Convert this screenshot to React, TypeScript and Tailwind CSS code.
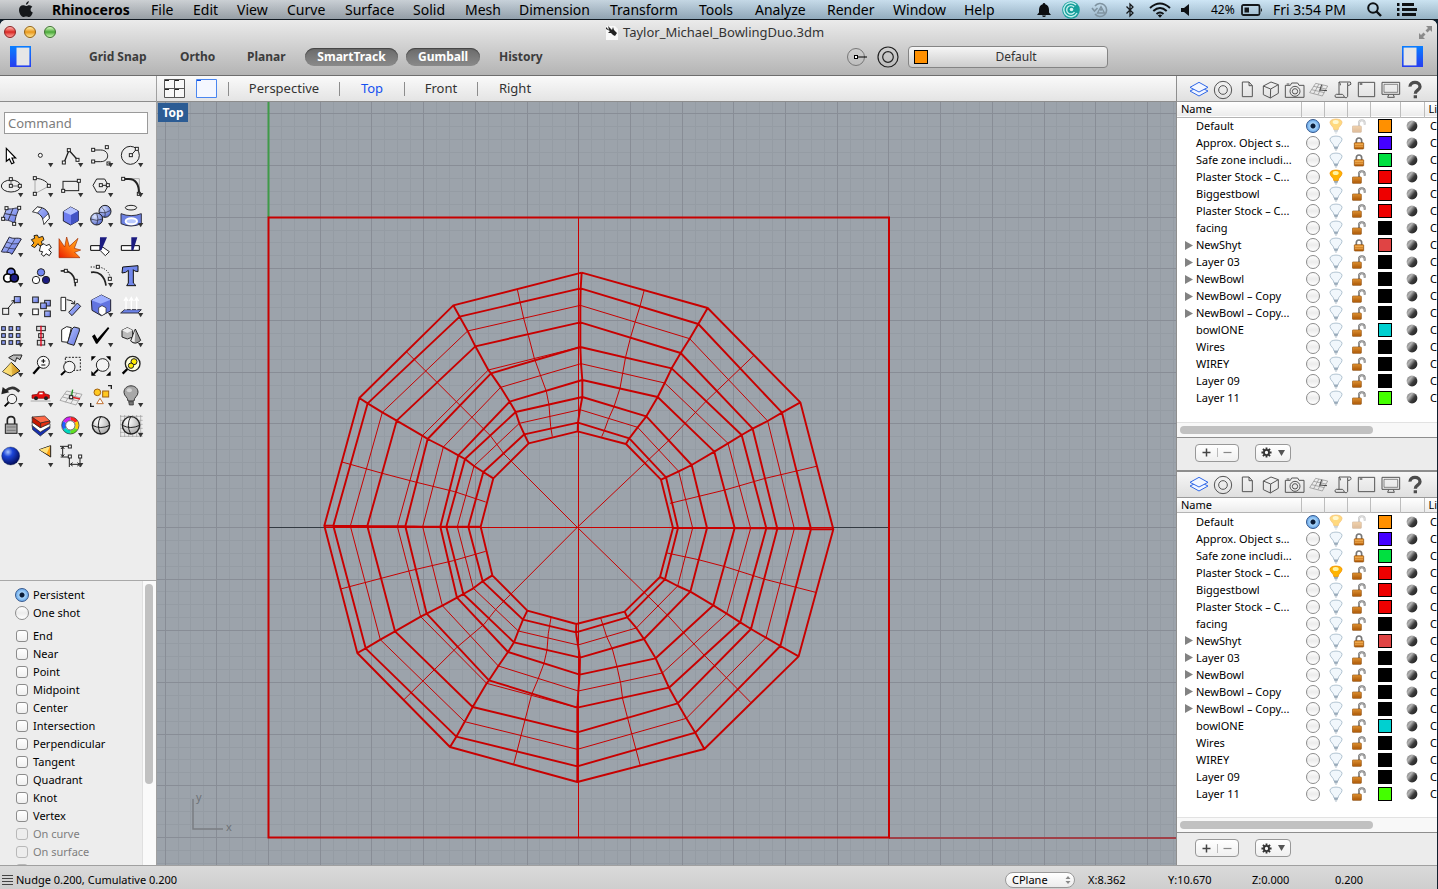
import React from "react";

type Pt = [number, number];

/* ---------- shared drawing helpers ---------- */

const Sq = ({ x, y }: { x: number; y: number }) => (
  <rect x={x - 5} y={y - 5} width="9" height="9" fill="#fff" stroke="#222" strokeWidth="3" />
);

const Gradients = () => (
  <svg className="absolute h-0 w-0" aria-hidden="true">
    <defs>
      <linearGradient id="blueBox" x1="0" y1="0" x2="1" y2="1">
        <stop offset="0" stopColor="#b9c8ff" />
        <stop offset="1" stopColor="#5f6fe0" />
      </linearGradient>
      <radialGradient id="blueBall" cx=".35" cy=".3" r=".8">
        <stop offset="0" stopColor="#dfe8ff" />
        <stop offset="1" stopColor="#4a5fc8" />
      </radialGradient>
      <radialGradient id="deepBall" cx=".35" cy=".28" r=".75">
        <stop offset="0" stopColor="#a8c4ff" />
        <stop offset=".35" stopColor="#1c45d8" />
        <stop offset="1" stopColor="#020a58" />
      </radialGradient>
      <radialGradient id="greyBall" cx=".35" cy=".3" r=".8">
        <stop offset="0" stopColor="#fff" />
        <stop offset="1" stopColor="#a2a2a2" />
      </radialGradient>
      <linearGradient id="fire" x1="0" y1="1" x2="1" y2="0">
        <stop offset="0" stopColor="#e81c00" />
        <stop offset=".5" stopColor="#ff7a10" />
        <stop offset="1" stopColor="#ffc020" />
      </linearGradient>
      <linearGradient id="gold" x1="0" y1="0" x2="1" y2="0">
        <stop offset="0" stopColor="#ffe680" />
        <stop offset="1" stopColor="#c98a10" />
      </linearGradient>
      <linearGradient id="brass" x1="0" y1="0" x2="0" y2="1">
        <stop offset="0" stopColor="#f2a23c" />
        <stop offset="1" stopColor="#b45c08" />
      </linearGradient>
      <linearGradient id="material" x1="0" y1=".1" x2="1" y2=".9">
        <stop offset="0" stopColor="#777" />
        <stop offset=".3" stopColor="#b4b4b4" />
        <stop offset=".6" stopColor="#3c3c3c" />
        <stop offset="1" stopColor="#1c1c1c" />
      </linearGradient>
      <linearGradient id="sideBlue" x1="0" y1="0" x2="0" y2="1">
        <stop offset="0" stopColor="#0a7cff" />
        <stop offset="1" stopColor="#2640f0" />
      </linearGradient>
    </defs>
  </svg>
);

/* ---------- tool palette ---------- */

type Tool = { name: string; more?: boolean; art: React.ReactNode };

const k = { stroke: "#222", strokeWidth: 3, fill: "none" } as const;

const tools: Tool[] = [
  { name: "Select", art: <path d="M19 22V61L28 54L35 68L42 65L36 51H47Z" fill="#fff" stroke="#000" strokeWidth="3.5" /> },
  { name: "Point", more: true, art: <circle cx="31" cy="43" r="6" {...k} fill="#fff" /> },
  { name: "Polyline", more: true, art: <g><path d="M12 65L27 28L53 57" {...k} strokeWidth="4" /><Sq x={12} y={65} /><Sq x={27} y={28} /><Sq x={53} y={57} /></g> },
  { name: "Curve", more: true, art: <g><path d="M10 27H32C60 27 60 62 32 62H10" {...k} /><Sq x={10} y={27} /><Sq x={10} y={62} /><Sq x={51} y={19} /><Sq x={56} y={68} /></g> },
  { name: "Circle", more: true, art: <g><circle cx="31" cy="43" r="27" {...k} /><path d="M33 43L50 24" {...k} /><Sq x={33} y={43} /><Sq x={51} y={24} /></g> },

  { name: "Ellipse", more: true, art: <g><ellipse cx="33" cy="45" rx="29" ry="18" {...k} /><path d="M33 25V45H59" {...k} strokeWidth="2" /><Sq x={33} y={45} /><Sq x={33} y={25} /><Sq x={60} y={45} /></g> },
  { name: "Arc", more: true, art: <g><path d="M15 68V22M15 68L57 45" stroke="#aaa" strokeWidth="3" /><path d="M15 22C38 22 54 34 57 45" {...k} /><Sq x={15} y={22} /><Sq x={15} y={69} /><Sq x={57} y={45} /></g> },
  { name: "Rectangle", more: true, art: <g><rect x="9" y="31" width="47" height="28" {...k} /><Sq x={10} y={60} /><Sq x={57} y={30} /></g> },
  { name: "Polygon", more: true, art: <g><path d="M20 24H44L55 43L44 63H20L9 43ZM33 43H54" {...k} /><Sq x={33} y={43} /><Sq x={54} y={43} /></g> },
  { name: "Fillet curves", more: true, art: <g><path d="M10 23H58V68" stroke="#aaa" strokeWidth="3" fill="none" /><path d="M10 24H26C46 24 57 36 57 68" {...k} strokeWidth="6" /><Sq x={10} y={24} /><Sq x={57} y={69} /></g> },

  { name: "Surface from points", more: true, art: <g><path d="M20 22C34 28 46 18 57 22L48 46L43 70C34 56 20 60 8 54Z" fill="url(#blueBox)" stroke="#334" strokeWidth="3" /><path d="M39 23L25 57M15 38L50 44" stroke="#334" strokeWidth="3" /><Sq x={20} y={22} /><Sq x={58} y={21} /><Sq x={43} y={69} /><Sq x={10} y={54} /></g> },
  { name: "Loft", more: true, art: <g><path d="M8 32L22 18C46 18 58 34 58 52L42 70C42 52 30 34 8 32Z" fill="url(#blueBox)" stroke="#222" strokeWidth="3" /><path d="M8 32L22 18L36 21L22 36Z" fill="#fff" stroke="#222" strokeWidth="2" /><path d="M38 54L55 38L58 52L42 70Z" fill="#fff" stroke="#222" strokeWidth="2" /></g> },
  { name: "Box", more: true, art: <g><path d="M32 18L55 30V59L32 72L10 60V32Z" fill="#6d7cf0" stroke="#223" strokeWidth="3" /><path d="M32 18L55 30L33 42L10 32Z" fill="#b4c2ff" /><path d="M33 42L55 30V59L33 72Z" fill="#4253c4" /></g> },
  { name: "Boolean union", more: true, art: <g><circle cx="45" cy="31" r="18" fill="url(#blueBall)" stroke="#222" strokeWidth="3" /><path d="M34 18Q50 30 44 49M28 34Q46 40 62 28" stroke="#223" strokeWidth="2" fill="none" /><circle cx="20" cy="54" r="18" fill="url(#blueBall)" stroke="#222" strokeWidth="3" /><path d="M20 36Q28 54 20 72M2 54Q20 62 38 54" stroke="#223" strokeWidth="2" fill="none" /></g> },
  { name: "Project curves", more: true, art: <g><ellipse cx="33" cy="20" rx="17" ry="7" {...k} /><path d="M3 38Q33 50 64 38V68Q33 82 3 68Z" fill="#6e83e4" stroke="#334" strokeWidth="3" /><ellipse cx="34" cy="61" rx="17" ry="9" fill="#b9c9ff" stroke="#fff" strokeWidth="6" /></g> },

  { name: "Mesh", more: true, art: <g><path d="M28 18C40 26 52 18 64 24L36 70C26 60 14 66 4 62Z" fill="url(#blueBox)" stroke="#223" strokeWidth="3" /><path d="M20 33Q38 42 54 38M12 47Q30 54 46 54M46 22L20 64" stroke="#223" strokeWidth="2" fill="none" /></g> },
  { name: "Plugins", art: <g><path d="M4 26L14 22L12 14L22 12L26 20L38 16L42 26L34 32L38 42L28 44L24 38L14 50L4 44L12 36Z" fill="#f8a010" stroke="#222" strokeWidth="3" /><path d="M32 44L42 38L48 44L58 40L64 50L56 56L64 64L58 74L48 68L42 76L34 70L38 62L28 60Z" fill="#fff" stroke="#222" strokeWidth="3" /></g> },
  { name: "Explode", art: <path d="M-3 23L14 48L20 18L28 46L54 22L43 52L62 57L44 64L60 80L-3 80Z" fill="url(#fire)" stroke="#a02800" strokeWidth="2" /> },
  { name: "Trim", art: <g><path d="M2 44H30V58H2Z" fill="#fff" stroke="#000" strokeWidth="3" /><path d="M38 48L58 62L46 74L30 58Z" fill="#fff" stroke="#222" strokeWidth="3" /><path d="M30 19H51L34 58H29Z" fill="#1b1b80" /></g> },
  { name: "Split", art: <g><path d="M4 44H58V58H4Z" fill="#fff" stroke="#000" strokeWidth="3" /><path d="M34 19H52L40 58H34Z" fill="#1b1b80" /></g> },

  { name: "Join", more: true, art: <g><circle cx="33" cy="34" r="12" fill="#6d7df0" stroke="#000" strokeWidth="5" /><circle cx="23" cy="51" r="12" fill="#fff" stroke="#000" strokeWidth="5" /><circle cx="43" cy="51" r="12" fill="#1b1b80" stroke="#000" strokeWidth="5" /></g> },
  { name: "Group", art: <g><circle cx="33" cy="34" r="11" fill="#7186f4" stroke="#222" strokeWidth="3" /><circle cx="18" cy="57" r="11" fill="#fff" stroke="#222" strokeWidth="3" /><circle cx="48" cy="57" r="11" fill="#1b1b80" stroke="#222" strokeWidth="3" /></g> },
  { name: "Edit points", art: <g><path d="M2 30C30 26 46 42 46 76" {...k} strokeWidth="5" /><Sq x={18} y={30} /><Sq x={48} y={60} /></g> },
  { name: "Offset", more: true, art: <g><path d="M3 34C26 30 44 44 48 74" {...k} strokeWidth="5" /><path d="M2 18H24Q58 22 62 56" {...k} strokeDasharray="4 4" /><Sq x={24} y={18} /><Sq x={60} y={54} /></g> },
  { name: "Text", art: <path d="M8 18L54 14V32L44 30L40 26V66L48 74H20L25 66V28L17 34L6 36Z" fill="#7187ec" stroke="#111" strokeWidth="3" /> },

  { name: "Move", more: true, art: <g><path d="M22 54L44 28M34 30L44 28L43 38" {...k} /><rect x="8" y="52" width="18" height="18" fill="#eee" stroke="#222" strokeWidth="3" /><rect x="43" y="17" width="18" height="18" fill="url(#blueBox)" stroke="#222" strokeWidth="3" /></g> },
  { name: "Copy", art: <g fill="url(#blueBox)" stroke="#222" strokeWidth="3"><rect x="8" y="18" width="17" height="17" /><rect x="8" y="54" width="17" height="17" fill="#fff" /><rect x="44" y="28" width="17" height="17" /><rect x="32" y="36" width="17" height="17" /><rect x="44" y="60" width="17" height="17" /></g> },
  { name: "Rotate", art: <g><path d="M3 19H17V59H3Z" fill="#fff" stroke="#222" strokeWidth="3" /><path d="M52 36L62 46L36 74L26 64Z" fill="url(#blueBox)" stroke="#222" strokeWidth="3" /><path d="M20 26Q36 26 43 38M33 37L44 39L44 29" {...k} /></g> },
  { name: "Boolean difference", more: true, art: <g><path d="M4 28L34 12L62 26V60L34 74L6 58Z" fill="#6274e0" stroke="#223" strokeWidth="3" /><path d="M4 28L34 12L62 26L32 38Z" fill="#9dafff" /><path d="M26 50L36 44L48 50V66L36 74L26 66Z" fill="#fff" stroke="#222" strokeWidth="2" /></g> },
  { name: "Extrude", more: true, art: <g><path d="M14 56L64 56L54 66H2Z" fill="#6b82e8" stroke="#334" strokeWidth="3" /><path d="M18 56V22M34 56V22M50 56V22M12 30L18 20L24 30M28 30L34 20L40 30M44 30L50 20L56 30" stroke="#fff" strokeWidth="4" fill="none" /></g> },

  { name: "Array", more: true, art: <g fill="#8a9bf4" stroke="#222" strokeWidth="3">{[17, 38, 59].map((y) => [5, 27, 49].map((x) => <rect key={`${x}${y}`} x={x} y={y} width="11" height="11" />))}</g> },
  { name: "Align", more: true, art: <g><rect x="20" y="16" width="26" height="13" fill="#ddd" stroke="#222" strokeWidth="3" /><rect x="26" y="38" width="14" height="12" fill="#ddd" stroke="#222" strokeWidth="3" /><rect x="22" y="58" width="22" height="14" fill="#ddd" stroke="#222" strokeWidth="3" /><path d="M33 14V76" stroke="#e0001a" strokeWidth="4" /></g> },
  { name: "Cage edit", more: true, art: <g><path d="M5 26L20 17L34 20L24 64L5 62Z" fill="#fff" stroke="#222" strokeWidth="3" /><path d="M36 24L42 18L58 22V30L42 73L22 67Z" fill="url(#blueBox)" stroke="#222" strokeWidth="3" /></g> },
  { name: "Check", more: true, art: <path d="M6 46L14 40L22 54L54 18L58 22L22 68H18Z" fill="#000" /> },
  { name: "Solids", more: true, art: <g><path d="M6 28L22 20L38 28V48L22 54L6 48Z" fill="#bbb" stroke="#222" strokeWidth="3" /><path d="M6 28L22 20L38 28L22 36Z" fill="#eee" /><path d="M46 24L62 58Q46 74 32 60Z" fill="#999" stroke="#222" strokeWidth="3" /><path d="M46 26L44 64L34 60Z" fill="#eee" /></g> },

  { name: "Drape", more: true, art: <g><path d="M34 34L60 60L34 76L8 62Z" fill="url(#gold)" stroke="#222" strokeWidth="3" /><path d="M34 34L36 74L8 62Z" fill="#ffe27a" opacity=".7" /><path d="M26 20L40 12H66L60 26L50 20L46 32L36 26Z" fill="#bbb" stroke="#222" strokeWidth="3" /></g> },
  { name: "Zoom", art: <g><circle cx="40" cy="34" r="18" fill="#f8f8f8" stroke="#222" strokeWidth="3" /><path d="M40 24V36M34 30H46M34 42H46" stroke="#000" strokeWidth="3" /><path d="M28 48L10 68" stroke="#000" strokeWidth="7" /></g> },
  { name: "Zoom window", art: <g><path d="M16 19H61V58H16Z" {...k} strokeDasharray="6 4" /><circle cx="28" cy="48" r="17" fill="#f3f3f3" stroke="#222" strokeWidth="3" /><path d="M16 60L3 72" stroke="#000" strokeWidth="6" /></g> },
  { name: "Zoom extents", art: <g><circle cx="38" cy="42" r="19" fill="#f3f3f3" stroke="#222" strokeWidth="3" /><path d="M24 56L12 68" stroke="#000" strokeWidth="6" /><path d="M4 16H18L4 30ZM62 16V30L48 16ZM4 74V60L18 74ZM62 74H48L62 60Z" fill="#000" /></g> },
  { name: "Zoom selected", art: <g><circle cx="38" cy="38" r="22" fill="#ffffe0" stroke="#222" strokeWidth="4" /><circle cx="42" cy="32" r="9" fill="#ffec00" stroke="#222" strokeWidth="3" /><circle cx="33" cy="44" r="8" fill="#ffec00" stroke="#222" strokeWidth="3" /><path d="M22 54L8 68" stroke="#000" strokeWidth="7" /></g> },

  { name: "Undo view", more: true, art: <g><path d="M16 30Q38 10 58 32" stroke="#333" strokeWidth="8" fill="none" /><path d="M4 40L8 18L28 34Z" fill="#222" /><circle cx="36" cy="54" r="14" fill="#f3f3f3" stroke="#222" strokeWidth="3" /><path d="M26 64L14 76" stroke="#000" strokeWidth="6" /></g> },
  { name: "Set view", more: true, art: <g><path d="M6 42L22 40L26 32H42L44 38L58 42V52H6Z" fill="#e81010" stroke="#700" strokeWidth="2" /><path d="M29 35H38V40H27Z" fill="#fff" /><circle cx="18" cy="52" r="6" fill="#222" /><circle cx="48" cy="52" r="6" fill="#222" /><path d="M2 60H62" stroke="#aaa" strokeWidth="3" /></g> },
  { name: "Construction plane", more: true, art: <g><path d="M20 30L66 40L48 72L0 58ZM14 39L60 50M8 48L54 60M36 33L16 64M51 36L32 68" stroke="#888" strokeWidth="2" fill="none" /><path d="M34 48L38 26" stroke="#209020" strokeWidth="4" /><path d="M34 48L60 54" stroke="#e02020" strokeWidth="4" /><Sq x={34} y={49} /></g> },
  { name: "Hide", more: true, art: <g><circle cx="22" cy="34" r="10" fill="#ffc820" stroke="#a06010" strokeWidth="3" /><rect x="38" y="30" width="18" height="18" fill="#ffc820" stroke="#a06010" strokeWidth="3" /><path d="M30 52L40 68H20Z" fill="#fff" stroke="#c07030" strokeWidth="3" /><path d="M54 14H64V24M2 66V76H12" {...k} strokeWidth="4" /></g> },
  { name: "Lights", more: true, art: <g><path d="M24 60C24 48 12 46 12 34C12 8 54 8 54 34C54 46 42 48 42 60Z" fill="#a8a8a8" stroke="#333" strokeWidth="3" /><ellipse cx="28" cy="28" rx="8" ry="6" fill="#d4d4d4" /><path d="M26 62H40V72H28Z" fill="#777" stroke="#222" strokeWidth="2" /></g> },

  { name: "Lock", more: true, art: <g><path d="M22 42V28Q22 17 33 17Q44 17 44 28V42" stroke="#222" strokeWidth="5" fill="none" /><rect x="16" y="39" width="35" height="28" fill="#aaa" stroke="#222" strokeWidth="3" /><path d="M20 48H47M20 58H47" stroke="#777" strokeWidth="3" /></g> },
  { name: "Layers", more: true, art: <g><path d="M6 42L30 62L60 46V52L31 75L8 56Z" fill="#1830b0" stroke="#222" strokeWidth="2" /><path d="M6 32L30 50L60 38V46L31 63L7 44Z" fill="#fff" stroke="#222" strokeWidth="2" /><path d="M6 18L32 34V50L7 34Z" fill="#c81800" stroke="#222" strokeWidth="2" /><path d="M6 18L44 15L60 30L32 36Z" fill="#ff6a48" stroke="#222" strokeWidth="2" /><path d="M32 36L60 30V36L32 50Z" fill="#e83010" stroke="#222" strokeWidth="2" /></g> },
  { name: "Properties", more: true, art: <g fill="none" strokeWidth="10">{["#ff2020", "#ffd000", "#60e020", "#00d8c0", "#2060ff", "#d020f0"].map((c, i) => <path key={c} d="M31 23A20 20 0 0 1 49 33" stroke={c} transform={`rotate(${i * 60} 31 43)`} />)}<circle cx="31" cy="43" r="26" stroke="#222" strokeWidth="2" /><circle cx="31" cy="43" r="14" stroke="#222" strokeWidth="2" fill="#fff" /></g> },
  { name: "Shade", art: <g><circle cx="33" cy="43" r="26" fill="url(#greyBall)" stroke="#222" strokeWidth="4" /><path d="M32 17Q18 42 32 69M7 43Q32 56 59 43" {...k} /></g> },
  { name: "Ghost", more: true, art: <g><path d="M2 12V78M14 12V78M26 12V78M38 12V78M50 12V78M62 12V78M0 16H68M0 28H68M0 40H68M0 52H68M0 64H68M0 76H68" stroke="#999" strokeWidth="2" /><circle cx="33" cy="43" r="26" fill="url(#greyBall)" stroke="#222" strokeWidth="4" /><path d="M32 17Q18 42 32 69M7 43Q32 56 59 43" {...k} /></g> },

  { name: "Render", more: true, art: <circle cx="32" cy="45" r="27" fill="url(#deepBall)" stroke="#013" strokeWidth="1" /> },
  { name: "Render options", more: true, art: <g><path d="M28 26L62 14V48Z" fill="#ffa010" stroke="#222" strokeWidth="3" /><path d="M28 26L60 16L50 38Z" fill="#ffe27a" /></g> },
  { name: "Dimension", more: true, art: <g><path d="M0 16H30M2 48H28M8 18V46M3 24L8 17L13 24M3 40L8 47L13 40M28 48V78M60 48V78M32 70H58M38 65L31 70L38 75M52 65L59 70L52 75" {...k} /><Sq x={30} y={17} /><Sq x={30} y={47} /><Sq x={61} y={47} /></g> },
];

/* ---------- layer data ---------- */

type Layer = { name: string; color: string; locked?: boolean; lit?: boolean; current?: boolean; kids?: boolean };

const layers: Layer[] = [
  { name: "Default", color: "#ff9000", current: true },
  { name: "Approx. Object s...", color: "#4400ff", locked: true },
  { name: "Safe zone includi...", color: "#00e040", locked: true },
  { name: "Plaster Stock – C...", color: "#ee0000", lit: true },
  { name: "Biggestbowl", color: "#ee0000" },
  { name: "Plaster Stock – C...", color: "#ee0000" },
  { name: "facing", color: "#000000" },
  { name: "NewShyt", color: "#e04444", locked: true, kids: true },
  { name: "Layer 03", color: "#000000", kids: true },
  { name: "NewBowl", color: "#000000", kids: true },
  { name: "NewBowl – Copy", color: "#000000", kids: true },
  { name: "NewBowl – Copy...", color: "#000000", kids: true },
  { name: "bowlONE", color: "#00d0d0" },
  { name: "Wires", color: "#000000" },
  { name: "WIREY", color: "#000000" },
  { name: "Layer 09", color: "#000000" },
  { name: "Layer 11", color: "#44ff00" },
];

const Bulb = ({ lit, dim }: { lit?: boolean; dim?: boolean }) => (
  <svg viewBox="0 0 42 48" className={dim ? "mx-auto h-4 w-3.5 opacity-50" : "mx-auto h-4 w-3.5"} aria-hidden="true">
    <path
      d="M15 36C15 26 3 22 3 13C3 0 39 0 39 13C39 22 27 26 27 36Z"
      fill={lit || dim ? "#ffb400" : "#f1f7fc"}
      stroke={lit || dim ? "#f09000" : "#a3b8c8"}
      strokeWidth="2.500"
    />
    {(lit || dim) && <ellipse cx="20" cy="12" rx="9" ry="6" fill="#fff3a0" />}
    <path d="M15 37H27M16 41H26M19 45H23" stroke="#8fa2b2" strokeWidth="3" />
  </svg>
);

const Padlock = ({ locked, dim }: { locked?: boolean; dim?: boolean }) => (
  <svg viewBox="0 0 42 42" className={dim ? "mx-auto h-3.5 w-3.5 opacity-40" : "mx-auto h-3.5 w-3.5"} aria-hidden="true">
    {locked ? (
      <>
        <path d="M13 22V14Q13 6 21 6Q29 6 29 14V22" stroke="#777" strokeWidth="5" fill="none" />
        <rect x="7" y="20" width="28" height="19" rx="2" fill="url(#brass)" stroke="#8a4a08" strokeWidth="2" />
        <path d="M9 26H33M9 32H33" stroke="#ffd080" strokeWidth="2" opacity=".7" />
      </>
    ) : (
      <>
        <path d="M21 22V12Q21 4 29.500 4Q38 4 38 12V17" stroke="#777" strokeWidth="6" fill="none" />
        <path d="M21 20V12Q21 4 29.500 4Q38 4 38 12V16" stroke="#c8c8c8" strokeWidth="2" fill="none" />
        <rect x="1" y="21" width="27" height="19" rx="2" fill="url(#brass)" stroke="#8a4a08" strokeWidth="2" />
        <path d="M4 27H25M4 33H25" stroke="#7a3c00" strokeWidth="2" opacity=".5" />
      </>
    )}
  </svg>
);

const radioClass =
  "block appearance-none rounded-full border border-[#8c8c8c] bg-linear-to-b from-white via-[#ececec] to-white checked:border-[#35598f] checked:bg-[radial-gradient(circle,#0a1c38_0_2px,#a8d4fa_3px,#5c9fe6_7px)]";

const s = { fill: "none", stroke: "#555", strokeWidth: 3 } as const;
const panelTabs: { name: string; art: React.ReactNode }[] = [
  { name: "Layers", art: <g fill="#f2f6ff" stroke="#2f67e8" strokeWidth="3"><path d="M9 39L36 54L63 39L36 26Z" /><path d="M9 28L36 42L63 28L36 13Z" /></g> },
  { name: "Properties", art: <g {...s}><circle cx="36" cy="36" r="26" /><circle cx="36" cy="36" r="13" /></g> },
  { name: "Document", art: <path d="M22 12H42L52 23V56H22ZM42 12V23H52" {...s} /> },
  { name: "Display", art: <path d="M13 24L36 12L58 20V46L34 60L13 50ZM13 24L35 33L58 20M35 33L34 60" {...s} /> },
  { name: "Camera", art: <g {...s}><path d="M7 22H22L26 15H44L48 22H63V58H7ZM11 18H19" /><circle cx="36" cy="40" r="15" /><circle cx="36" cy="40" r="8" /></g> },
  { name: "Planes", art: <g stroke="#888" strokeWidth="2" fill="none"><path d="M26 16L62 24L46 54L8 44ZM20 25L57 33M14 35L52 44M36 18L20 47M48 21L33 50" /><path d="M38 38L44 20M38 36L60 38" stroke="#444" strokeWidth="3" /></g> },
  { name: "Notes", art: <path d="M24 12H58Q64 20 54 22H50V56Q46 62 40 58H14Q8 52 16 49H24V12Q30 18 28 22M50 22V14M24 49H34Q40 52 40 58" {...s} /> },
  { name: "Window", art: <g {...s}><path d="M10 13H59V56H10Z" /><path d="M14 18H22" strokeWidth="4" /></g> },
  { name: "Monitor", art: <g {...s}><path d="M9 13H62V49H9Z" /><path d="M15 19H56V43H15Z" strokeWidth="2" /><path d="M29 50L26 58H46L43 50" /></g> },
  { name: "Help", art: <path d="M21 26C20 9 52 9 51 26C51 37 37 36 37 47M37 52V61" stroke="#4c4c4c" strokeWidth="10" fill="none" /> },
];

function LayerPanel({ id, last }: { id: string; last?: boolean }) {
  return (
    <section className={last ? "flex min-h-0 flex-1 flex-col" : "flex shrink-0 flex-col border-b-2 border-[#8e8e8e]"}>
      <div className="flex h-[26px] shrink-0 items-center border-b border-[#9a9a9a] bg-linear-to-b from-[#f6f6f6] to-[#e0e0e0] pl-2.5 pt-0.5">
        {panelTabs.map((t) => (
          <button key={t.name} aria-label={t.name} className="w-6 shrink-0">
            <svg viewBox="0 0 72 72" className="block h-6 w-6">{t.art}</svg>
          </button>
        ))}
      </div>
      <div className={last ? "min-h-0 flex-1 overflow-hidden bg-white" : "overflow-hidden bg-white pb-[15px]"}>
        <table className="w-full table-fixed border-collapse text-[11px] leading-4">
          <colgroup>
            <col />
            <col className="w-[23px]" />
            <col className="w-[23px]" />
            <col className="w-[23px]" />
            <col className="w-[30px]" />
            <col className="w-6" />
            <col className="w-[13px]" />
          </colgroup>
          <thead>
            <tr className="h-[15px] border-b border-[#b4b4b4] bg-linear-to-b from-white to-[#ececec] text-left">
              <th className="p-0 pl-1 font-normal leading-[14px]">Name</th>
              {["Current", "On", "Locked", "Color", "Material"].map((h) => (
                <th key={h} aria-label={h} className="border-l border-[#bdbdbd] p-0" />
              ))}
              <th className="overflow-hidden border-l border-[#bdbdbd] p-0 pl-1 font-normal leading-[14px]">Li</th>
            </tr>
          </thead>
          <tbody>
            {layers.map((l, i) => (
              <tr key={i} className="h-[17px]">
                <td className="p-0">
                  <div className="flex h-[17px] items-center whitespace-nowrap pl-1">
                    <span className="flex w-[15px] items-center">
                      {l.kids && (
                        <svg viewBox="0 0 8 9" className="ml-1 h-[9px] w-2"><path d="M0 0L8 4.5L0 9Z" fill="#828282" /></svg>
                      )}
                    </span>
                    {l.name}
                  </div>
                </td>
                <td className="p-0">
                  <input type="radio" name={`current-${id}`} defaultChecked={l.current} aria-label={`Make ${l.name} current`} className={`${radioClass} mx-auto h-3.5 w-3.5`} />
                </td>
                <td className="p-0"><Bulb lit={l.lit} dim={l.current} /></td>
                <td className="p-0"><Padlock locked={l.locked} dim={l.current} /></td>
                <td className="p-0">
                  <div className="mx-auto h-3.5 w-3.5 border border-black" style={{ backgroundColor: l.color }} />
                </td>
                <td className="p-0">
                  <svg viewBox="0 0 12 12" className="mx-auto h-3 w-3"><circle cx="6" cy="6" r="5.4" fill="url(#material)" /></svg>
                </td>
                <td className="overflow-hidden p-0 pl-1.5">C</td>
              </tr>
            ))}
          </tbody>
        </table>
      </div>
      <div className="flex h-[15px] shrink-0 items-center border-t border-[#e2e2e2] bg-[#f8f8f8] pl-[3px]">
        <div className="h-2 w-[193px] rounded-full bg-[#c1c1c1]" />
      </div>
      <div className="flex h-[33px] shrink-0 items-center gap-4 border-t border-[#8e8e8e] bg-[#ececec] pb-0.5 pl-[18px]">
        <div className="flex h-[18px] w-11 items-center rounded border border-[#989898] bg-linear-to-b from-white to-[#f0f0f0]">
          <button aria-label="Add layer" className="flex flex-1 justify-center border-r border-[#bbb]">
            <svg viewBox="0 0 9 9" className="h-[9px] w-[9px]"><path d="M4.5 .5V8.500M.5 4.5H8.500" stroke="#444" strokeWidth="1.500" /></svg>
          </button>
          <button aria-label="Remove layer" className="flex flex-1 justify-center">
            <svg viewBox="0 0 9 9" className="h-[9px] w-[9px]"><path d="M.5 4.5H8.500" stroke="#888" strokeWidth="1.200" /></svg>
          </button>
        </div>
        <button aria-label="Layer actions" className="flex h-[18px] w-9 items-center justify-center gap-1.5 rounded border border-[#989898] bg-linear-to-b from-white to-[#f0f0f0]">
          <svg viewBox="0 0 12 12" className="h-[11px] w-[11px]">
            <circle cx="6" cy="6" r="2.8" fill="none" stroke="#333" strokeWidth="2" />
            {[0, 45, 90, 135].map((a) => (
              <path key={a} d="M6 .5V2.8M6 9.2V11.5" stroke="#333" strokeWidth="2" transform={`rotate(${a} 6 6)`} />
            ))}
          </svg>
          <svg viewBox="0 0 7 6" className="h-1.5 w-[7px]"><path d="M0 0H7L3.5 6Z" fill="#555" /></svg>
        </button>
      </div>
    </section>
  );
}

/* ---------- viewport geometry ----------
   Mesh points are stored in thirds of a pixel from the mesh's top-left origin. */

const east = (pts: Pt[], down = 0): Pt[] => pts.map(([x, y]) => [x + 780, y + down]);
const south = (pts: Pt[]): Pt[] => pts.map(([x, y]) => [x, y + 780]);

const nSpoke: Pt[] = east([[35, 38], [32, 85], [31, 136], [31, 187], [31, 261], [33, 311], [37, 360], [37, 411], [30, 449], [24, 488], [23, 514]]);
const sSpoke: Pt[] = east([[22, 786], [22, 739], [22, 688], [22, 637], [22, 563], [25, 513], [29, 464], [30, 413], [24, 375], [18, 337], [19, 312]], 780);

const rightSpokes: Pt[][] = [
  nSpoke,
  east([[413, 144], [385, 192], [359, 236], [332, 279], [305, 325], [284, 369], [263, 411], [229, 469], [203, 502], [178, 535], [168, 552]]),
  east([[691, 427], [636, 458], [593, 483], [548, 506], [515, 525], [474, 550], [433, 575], [365, 615], [326, 634], [288, 652], [273, 659]]),
  east([[790, 808], [723, 807], [673, 806], [622, 806], [589, 805], [542, 805], [494, 804], [411, 804], [368, 804], [324, 804], [309, 804]]),
  east([[686, 409], [631, 378], [588, 353], [543, 327], [511, 307], [470, 281], [430, 256], [361, 215], [323, 198], [285, 178], [270, 171]], 780),
  east([[403, 687], [376, 638], [349, 595], [323, 550], [297, 503], [277, 459], [257, 415], [222, 357], [199, 324], [172, 292], [164, 275]], 780),
  sSpoke,
];

const doubled = (p: Pt[]): Pt[] => [...p.slice(0, 4), p[4], ...p.slice(4)];

const leftSpokes: Pt[][] = [
  doubled(sSpoke),
  south([[420, 681], [439, 650], [464, 605], [488, 561], [530, 490], [537, 481], [565, 438], [594, 396], [612, 367], [625, 333], [639, 299], [652, 272]]),
  south([[142, 399], [167, 385], [211, 359], [255, 334], [332, 290], [350, 281], [397, 257], [441, 233], [460, 222], [490, 205], [518, 184], [547, 166]]),
  [[43, 797], [70, 797], [121, 798], [172, 798], [262, 799], [286, 799], [338, 800], [391, 800], [409, 800], [442, 800], [475, 800], [512, 800]],
  [[148, 414], [173, 430], [217, 457], [260, 482], [337, 527], [353, 537], [400, 561], [445, 586], [465, 597], [492, 618], [520, 636], [550, 655]],
  [[430, 136], [449, 170], [473, 213], [496, 259], [535, 330], [543, 340], [572, 382], [599, 425], [617, 456], [628, 490], [643, 523], [656, 550]],
  doubled(nSpoke),
];

const isoLines: Pt[][] = [
  east([[222, 93], [210, 139], [195, 187], [182, 231], [167, 290], [158, 340], [150, 385], [132, 440], [115, 478], [101, 517], [95, 530]]),
  east([[552, 286], [409, 423], [296, 542], [22, 802]]),
  east([[739, 619], [582, 656], [465, 690], [300, 730]]),
  east([[737, 217], [585, 178], [465, 140], [385, 119], [291, 99]], 780),
  east([[543, 548], [403, 406], [293, 286], [22, 22]], 780),
  east([[211, 738], [173, 595], [158, 537], [152, 490], [141, 440], [127, 387], [110, 350], [92, 294]], 780),
  south([[611, 733], [645, 600], [665, 523], [684, 478], [702, 430], [711, 390], [715, 340], [723, 293]]),
  south([[281, 540], [443, 380], [522, 313], [560, 265], [802, 22]]),
  south([[92, 207], [297, 153], [430, 122], [527, 94]]),
  [[96, 606], [217, 640], [320, 667], [434, 695], [527, 726]],
  [[290, 276], [488, 474], [541, 527], [582, 582], [802, 802]],
  [[622, 88], [641, 175], [655, 226], [673, 295], [691, 345], [709, 394], [717, 435], [722, 500], [727, 530]],
];

const line = (pts: Pt[]) => "M" + pts.map((p) => p.join(" ")).join("L");
const ring = (spokes: Pt[][], i: number) => line(spokes.map((sp) => sp[i]));

const rightThin = [2, 5, 8];
const leftThin = [2, 4, 6, 9];
const rings = (spokes: Pt[][], thin: number[], wantThin: boolean) =>
  spokes[0].map((_, i) => i).filter((i) => thin.includes(i) === wantThin).map((i) => ring(spokes, i)).join("");

const boldPath = rings(rightSpokes, rightThin, false) + rings(leftSpokes, leftThin, false) + [...rightSpokes, ...leftSpokes.slice(1, -1)].map(line).join("");
const thinPath = rings(rightSpokes, rightThin, true) + rings(leftSpokes, leftThin, true) + isoLines.map(line).join("");

const STEP = 12.925;
const gridPath = (major: boolean) => {
  let d = "";
  for (let i = -20; i < 160; i++) {
    if ((i % 4 === 0) !== major) continue;
    d += `M${Math.floor(111.5 + i * STEP) + 0.5} 0V2400`;
  }
  for (let i = -120; i < 60; i++) {
    if ((i % 4 === 0) !== major) continue;
    d += `M0 ${Math.floor(735.5 + i * STEP) + 0.5}H2400`;
  }
  return d;
};

const Viewport = () => (
  <svg className="absolute inset-0 h-full w-full" aria-label="Top view of the bowl mesh">
    <path d={gridPath(false)} stroke="#959ca4" strokeWidth="1" />
    <path d={gridPath(true)} stroke="#888d96" strokeWidth="1" />
    <path d="M111.500 0V115" stroke="#3f9a48" strokeWidth="2" />
    <path d="M732 736H2400" stroke="#a04048" strokeWidth="2" />
    <path d="M112 425.500H732" stroke="#333a42" strokeWidth="1" />
    <path d="M421.500 115V736M167 425.500H677" stroke="#c80000" strokeWidth="1" />
    <rect x="111.500" y="115.500" width="620.500" height="620" fill="none" stroke="#c80000" strokeWidth="2" />
    <g transform="translate(153 158) scale(.33333)" fill="none" stroke="#c80000" strokeLinejoin="round">
      <path d={thinPath} strokeWidth="3" />
      <path d={boldPath} strokeWidth="5.800" />
    </g>
    <path d="M36 697V727H66" fill="none" stroke="#7a7e83" strokeWidth="1.500" />
    <text x="39" y="699" fontSize="11" fill="#6e7277">y</text>
    <text x="69" y="729" fontSize="11" fill="#6e7277">x</text>
  </svg>
);

/* ---------- small chrome pieces ---------- */

const menus = ["File", "Edit", "View", "Curve", "Surface", "Solid", "Mesh", "Dimension", "Transform", "Tools", "Analyze", "Render", "Window", "Help"];

const Divider = () => <span className="h-3.5 w-px bg-[#8c8c8c]" />;

const snaps = ["End", "Near", "Point", "Midpoint", "Center", "Intersection", "Perpendicular", "Tangent", "Quadrant", "Knot", "Vertex"];
const offSnaps = ["On curve", "On surface"];

const boxClass =
  "block h-3 w-3 shrink-0 appearance-none rounded-[3px] border border-[#8c8c8c] bg-linear-to-b from-white to-[#efefef] disabled:border-[#b8b8b8] disabled:bg-none";

const lights = [
  "from-[#ffb0b0] via-[#d82020] to-[#ff9c9c] border-[#8c2020]",
  "from-[#fff0a0] via-[#e89810] to-[#ffe890] border-[#946010]",
  "from-[#d8ffc0] via-[#48a838] to-[#c8f8b0] border-[#3c7030]",
];

export default function App() {
  return (
    <div className="flex h-screen flex-col overflow-hidden bg-[#10202e] font-['Lucida_Grande','Noto_Sans',sans-serif] text-black">
      <Gradients />

      <header className="flex h-5 shrink-0 items-center justify-between whitespace-nowrap border-b border-[#101820] bg-[linear-gradient(to_bottom,rgba(255,255,255,0.3),rgba(60,70,80,0.25)),linear-gradient(to_right,#b9bcbf,#b0bac3_30%,#aac6da_50%,#b9dbf2_80%,#b4d6ea)] text-[14px] leading-[18px]">
        <nav className="grid h-full grid-cols-[52px_99px_42px_44px_50px_58px_68px_52px_54px_91px_89px_56px_72px_66px_71px_40px] items-center">
          <button aria-label="Apple menu" className="flex justify-center">
            <svg viewBox="0 0 16 18" className="h-[17px] w-4"><path d="M11 0Q11 3 8 4Q7.600 1.500 11 0ZM8 5.200C9 5.200 10 4.400 11.500 4.400Q13.600 4.500 14.700 6C12 7.800 12.400 11 15.200 12.200C14 15.500 12.600 17 11.300 17C10 17 9.600 16.300 8.200 16.300C6.800 16.300 6.200 17 5 17C3 17 .6 13 .6 9.600C.6 6.200 2.600 4.500 4.800 4.500C6.200 4.500 7.200 5.200 8 5.200Z" fill="#15181b" /></svg>
          </button>
          <button className="text-left font-bold">Rhinoceros</button>
          {menus.map((m) => (
            <button key={m} className="text-left">{m}</button>
          ))}
        </nav>
        <div className="grid grid-cols-[25px_29px_34px_24px_32px_30px_62px_94px_30px_41px] items-center">
          <svg viewBox="0 0 14 14" className="h-3.5 w-3.5"><path d="M7 0Q8.300 0 8.300 1.300Q12 2.500 12 7V9.500L14 12H0L2 9.500V7Q2 2.500 5.700 1.300Q5.700 0 7 0ZM5 12.500H9Q8.500 14 7 14Q5.500 14 5 12.500Z" fill="#0b0d10" /></svg>
          <svg viewBox="0 0 18 18" className="h-[18px] w-[18px]"><circle cx="9" cy="9" r="8.800" fill="#17a09c" /><path d="M15 12A7 7 0 1 1 14 4M12.500 11A4.200 4.200 0 1 1 12 6" fill="none" stroke="#c6f0ee" strokeWidth="1.400" /><circle cx="9.500" cy="8.500" r="1.800" fill="#d4f6f4" /></svg>
          <svg viewBox="0 0 18 16" className="h-4 w-[18px]"><path d="M4 4A6.500 6.500 0 1 1 4 12M1 6L3.500 9L6.500 6" fill="none" stroke="#7f93a0" strokeWidth="1.600" /><path d="M10 4.500L13.500 11H6.500ZM10 6.500V9" fill="none" stroke="#7f93a0" strokeWidth="1.300" /></svg>
          <svg viewBox="0 0 10 16" className="h-4 w-2.5"><path d="M1.500 4.500L8 11L5 14V2L8 5L1.500 11.500" fill="none" stroke="#15181b" strokeWidth="1.300" /></svg>
          <svg viewBox="0 0 22 16" className="h-4 w-[22px]"><g fill="none" stroke="#0e1114" strokeWidth="2"><path d="M1 6Q11 -3 21 6M4.300 9Q11 3 17.700 9M7.500 12Q11 9 14.500 12" /></g><path d="M8.800 13.300Q11 11.800 13.200 13.300L11 15.700Z" fill="#0e1114" /></svg>
          <svg viewBox="0 0 8 12" className="h-3 w-2"><path d="M0 4H3L8 0V12L3 8H0Z" fill="#0e1114" /></svg>
          <span className="flex items-center gap-1.5 text-[12px]">42%
            <svg viewBox="0 0 22 12" className="h-3 w-[22px]"><rect x="1" y="1" width="17.500" height="10" rx="1.500" fill="none" stroke="#15181b" strokeWidth="1.800" /><rect x="3.500" y="3.500" width="4.500" height="5" fill="#15181b" /><path d="M20 4Q22 6 20 8Z" fill="#15181b" /></svg>
          </span>
          <span>Fri 3:54 PM</span>
          <svg viewBox="0 0 15 15" className="h-[15px] w-[15px]"><circle cx="6" cy="6" r="4.800" fill="none" stroke="#0e1114" strokeWidth="2" /><path d="M9.500 9.500L14 14" stroke="#0e1114" strokeWidth="2.400" /></svg>
          <svg viewBox="0 0 20 13" className="h-[13px] w-5"><path d="M0 1.500H2.500M5 1.500H17M0 6.500H2.500M5 6.500H20M0 11.500H2.500M5 11.500H19" stroke="#0e1114" strokeWidth="2.800" /></svg>
        </div>
      </header>

      <div className="mr-px flex min-h-0 flex-1 flex-col overflow-hidden rounded-t-md bg-[#ededed]">
        <div className="shrink-0 border-b border-[#6e6e6e] bg-linear-to-b from-[#ebebeb] to-[#b4b4b4]">
          <div className="grid h-6 grid-cols-[1fr_auto_1fr] items-center px-1">
            <div className="flex gap-2">
              {lights.map((c, i) => (
                <button key={i} aria-label={["Close", "Minimize", "Zoom"][i]} className={`h-3 w-3 rounded-full border bg-linear-to-b ${c}`} />
              ))}
            </div>
            <h1 className="flex items-center gap-1 pr-2 text-[13px] leading-5 text-[#333]">
              <svg viewBox="0 0 14 15" className="h-[15px] w-3.5"><path d="M1 1H10L13 4V15H1Z" fill="#f8f8f8" /><path d="M1 2L4 5L3 1L7 5L8 2L9 5L12 8L10 11L8 10L6 8L3 8L5 6L1 4Z" fill="#222" /></svg>
              Taylor_Michael_BowlingDuo.3dm
            </h1>
            <button aria-label="Full screen" className="justify-self-end">
              <svg viewBox="0 0 15 15" className="h-[15px] w-[15px]"><path d="M8 1H14V7L12 5L9.500 7.500L7.500 5.500L10 3ZM1 8L3 10L5.500 7.500L7.500 9.500L5 12L7 14H1Z" fill="#8a8a8a" /></svg>
            </button>
          </div>
          <div className="flex h-[31px] items-center justify-between pb-1.5 pl-2.5 pr-3.5 text-[12px] font-bold text-[#3c3c3c]">
            <div className="flex items-center">
              <button aria-label="Toggle left sidebar">
                <svg viewBox="0 0 21 21" className="block h-[21px] w-[21px]"><rect x=".8" y=".8" width="19.400" height="19.400" fill="#e6e6e6" stroke="url(#sideBlue)" strokeWidth="1.600" /><path d="M1 1H6.500V20H1Z" fill="url(#sideBlue)" /></svg>
              </button>
              <div className="ml-[58px] grid grid-cols-[91px_67px_58px_101px_93px_60px] items-center">
                <button className="text-left">Grid Snap</button>
                <button className="text-left">Ortho</button>
                <button className="text-left">Planar</button>
                <button className="mr-2 h-[18px] rounded-full bg-linear-to-b from-[#6a6a6a] to-[#8a8a8a] leading-[18px] text-white shadow-[inset_0_1px_1px_#444]">SmartTrack</button>
                <button className="mr-[19px] h-[18px] rounded-full bg-linear-to-b from-[#6a6a6a] to-[#8a8a8a] leading-[18px] text-white shadow-[inset_0_1px_1px_#444]">Gumball</button>
                <button className="text-left">History</button>
              </div>
              <div className="ml-[288px] flex items-center gap-2.5">
                <svg viewBox="0 0 20 20" className="h-5 w-5"><circle cx="9" cy="10" r="8.500" fill="none" stroke="#777" /><path d="M10 10H20" stroke="#000" strokeWidth="1.200" /><rect x="7.500" y="8.500" width="3" height="3" fill="#fff" stroke="#000" /></svg>
                <svg viewBox="0 0 22 22" className="h-[22px] w-[22px]"><g fill="none" stroke="#222" strokeWidth="1.200"><circle cx="11" cy="11" r="10" /><circle cx="11" cy="11" r="5.300" /></g></svg>
                <label className="relative -ml-px block">
                  <select aria-label="Current layer" className="block h-[22px] w-[200px] appearance-none rounded border border-[#848484] bg-linear-to-b from-[#f6f6f6] to-[#cdcdcd] pl-4 text-center font-normal text-[#333]">
                    <option>Default</option>
                  </select>
                  <span className="absolute left-1.5 top-1 h-3.5 w-3.5 border border-black bg-[#ff9000]" />
                </label>
              </div>
            </div>
            <button aria-label="Toggle right sidebar">
              <svg viewBox="0 0 21 21" className="block h-[21px] w-[21px]"><rect x=".8" y=".8" width="19.400" height="19.400" fill="#e6e6e6" stroke="url(#sideBlue)" strokeWidth="1.600" /><path d="M14.500 1H20V20H14.500Z" fill="url(#sideBlue)" /></svg>
            </button>
          </div>
        </div>

        <div className="flex min-h-0 flex-1">
          <aside className="flex w-[157px] shrink-0 flex-col border-r border-[#a0a0a0] bg-[#ededed]">
            <div className="h-[26px] shrink-0 border-b border-[#8c8c8c] bg-linear-to-b from-[#f8f8f8] to-[#e6e6e6]" />
            <div className="px-1 pb-[7px] pr-2 pt-2.5">
              <input aria-label="Command" placeholder="Command" className="block h-[22px] w-full border border-[#9a9a9a] bg-white px-[3px] text-[13px] placeholder:text-[#7c7c7c]" />
            </div>
            <div className="grid grid-cols-[repeat(5,30px)]">
              {tools.map((t) => (
                <button key={t.name} aria-label={t.name} className="h-[30px]">
                  <svg viewBox="0 0 90 90" className="block h-[30px] w-[30px] overflow-visible">
                    {t.art}
                    {t.more && <path d="M54 66H70L62 79Z" fill="#333" />}
                  </svg>
                </button>
              ))}
            </div>
            <div className="mt-auto flex h-[285px] shrink-0 border-t border-[#a8a8a8] text-[11px] leading-[18px]">
              <div className="flex-1 overflow-hidden pl-[15px] pt-[5px]">
                {["Persistent", "One shot"].map((m, i) => (
                  <label key={m} className="flex h-[18px] items-center gap-1">
                    <input type="radio" name="snap-mode" defaultChecked={i === 0} className={`${radioClass} h-3.5 w-3.5`} />
                    {m}
                  </label>
                ))}
                <div className="mt-[5px]">
                  {[...snaps, ...offSnaps].map((n) => {
                    const off = offSnaps.includes(n);
                    return (
                      <label key={n} className={off ? "flex h-[18px] items-center gap-[5px] whitespace-nowrap pl-px text-[#7e7e7e]" : "flex h-[18px] items-center gap-[5px] pl-px"}>
                        <input type="checkbox" disabled={off} className={boxClass} />
                        {n}
                      </label>
                    );
                  })}
                  <div className="flex h-[18px] items-center pl-px">
                    <input type="checkbox" disabled aria-label="On polysurface" className={boxClass} />
                  </div>
                </div>
              </div>
              <div className="w-3.5 shrink-0 border-l border-[#e0e0e0] bg-[#fafafa] pl-0.5 pt-[3px]">
                <div className="h-[200px] w-2 rounded-full bg-[#c1c1c1]" />
              </div>
            </div>
          </aside>

          <main className="flex min-w-0 flex-1 flex-col">
            <div className="flex h-[26px] shrink-0 items-center border-b border-[#8c8c8c] bg-linear-to-b from-[#fafafa] to-[#e4e4e4] pl-[7px] text-[13px] text-[#333]">
              <button aria-label="Four viewports" className="mr-[11px]">
                <svg viewBox="0 0 21 19" className="block h-[19px] w-[21px]"><path d="M.5 .5H20.500V18.500H.5ZM10.500 .5V18.500M.5 9.500H20.500" fill="#f8f8f8" stroke="#555" /><path d="M1 1.500H5M11 1.500H15M1 10.500H5M11 10.500H15" stroke="#222" /></svg>
              </button>
              <button aria-label="Single viewport" className="mr-[11px]">
                <svg viewBox="0 0 21 19" className="block h-[19px] w-[21px]"><path d="M.5 .5H20.500V18.500H.5Z" fill="#f4f7ff" stroke="#4a86f0" /><path d="M1 1.500H5" stroke="#1050e0" /></svg>
              </button>
              <Divider />
              <button className="w-[110px] text-center">Perspective</button>
              <Divider />
              <button className="w-16 text-center text-[#1450f0]">Top</button>
              <Divider />
              <button className="w-[72px] text-center">Front</button>
              <Divider />
              <button className="w-[74px] text-center">Right</button>
            </div>
            <div className="relative min-h-0 flex-1 overflow-hidden bg-[#9ca3ab]">
              <Viewport />
              <span className="absolute left-px top-px h-[19px] w-[30px] bg-[#2c5c94] text-center text-[12px] font-bold leading-[19px] text-white">Top</span>
            </div>
          </main>

          <aside className="flex w-[261px] shrink-0 flex-col overflow-hidden border-l border-[#8e8e8e] bg-[#ececec]">
            <LayerPanel id="upper" />
            <LayerPanel id="lower" last />
          </aside>
        </div>

        <footer className="flex h-6 shrink-0 items-center justify-between border-t border-[#a0a0a0] bg-linear-to-b from-[#dadada] to-[#cecece] pl-0.5 pt-1 text-[11px] leading-4">
          <span className="flex items-center gap-[3px]">
            <svg viewBox="0 0 11 10" className="h-2.5 w-[11px]"><path d="M0 .5H11M0 3.500H11M0 6.500H11M0 9.500H11" stroke="#444" /></svg>
            Nudge 0.200, Cumulative 0.200
          </span>
          <div className="grid grid-cols-[83px_80px_84px_83px_102px] items-center">
            <label className="relative block w-[70px]">
              <select aria-label="Coordinate system" className="block h-4 w-full appearance-none rounded-full border border-[#999] bg-linear-to-b from-white to-[#ececec] pl-1.5 text-[11px] leading-3">
                <option>CPlane</option>
              </select>
              <svg viewBox="0 0 6 8" className="pointer-events-none absolute right-1 top-1 h-2 w-1.5"><path d="M3 0L5.500 3H.5ZM3 8L.5 5H5.500Z" fill="#888" /></svg>
            </label>
            <span>X:8.362</span>
            <span>Y:10.670</span>
            <span>Z:0.000</span>
            <span>0.200</span>
          </div>
        </footer>
      </div>
    </div>
  );
}
